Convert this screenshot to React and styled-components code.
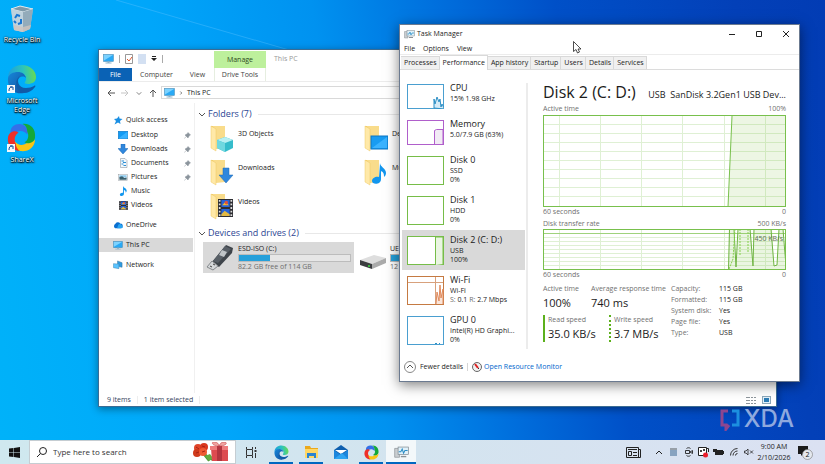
import React from "react";
import styled, { createGlobalStyle, css } from "styled-components";

const GlobalStyle = createGlobalStyle`
  * {
    box-sizing: border-box;
  }
  body {
    margin: 0;
    font-family: "Open Sans", "Noto Sans", sans-serif;
    font-size: 7px;
    line-height: 10px;
    color: #1b1b1b;
  }
  button, input {
    font: inherit;
    color: inherit;
    border: 0;
    padding: 0;
    background: none;
  }
  a {
    color: inherit;
    text-decoration: none;
  }
  svg {
    display: block;
    flex-shrink: 0;
  }
`;

const Screen = styled.div`
  display: flex;
  flex-direction: column;
  height: 100vh;
  overflow: hidden;
`;

const Desktop = styled.main`
  position: relative;
  flex: 1;
  min-height: 0;
  background: linear-gradient(
    80deg,
    #00b2f9 0%,
    #00a6fa 25%,
    #0092f0 43%,
    #006fdd 57%,
    #0050c8 70%,
    #0340b8 90%,
    #023cb4 100%
  );
`;

const Beam = styled.svg`
  position: absolute;
  top: 0;
  left: 14%;
  width: 21%;
  height: 50px;
`;

const Shortcuts = styled.div`
  position: relative;
  display: flex;
  flex-direction: column;
  align-items: center;
  width: 44px;
  padding-top: 5px;
  gap: 9px;
`;

const Shortcut = styled.button`
  display: flex;
  flex-direction: column;
  align-items: center;
  gap: 2px;
  width: 44px;
  min-height: 50px;
  color: #fff;
  line-height: 9px;
  text-shadow: 0 1px 1px #000, 0 0 2px #000, 1px 1px 2px #000;
`;

const Window = styled.section`
  position: absolute;
  display: flex;
  flex-direction: column;
  background: #fff;
`;

const ExplorerWindow = styled(Window)`
  top: 49px;
  left: 98px;
  right: 48px;
  bottom: 33px;
  border: 1px solid #3b6c94;
  box-shadow: 0 2px 8px rgba(0, 0, 0, 0.4);
`;

const TaskWindow = styled(Window)`
  top: 24px;
  left: 399px;
  right: 25px;
  bottom: 58px;
  border: 1px solid #6b7a90;
  box-shadow: 0 3px 12px rgba(0, 0, 0, 0.5);
`;

/* Explorer */

const QuickBar = styled.div`
  display: flex;
  align-items: stretch;
  height: 18px;
`;

const QuickTools = styled.div`
  display: flex;
  align-items: center;
  gap: 5px;
  width: 115px;
  padding-left: 4px;
`;

const Bar = styled.span`
  width: 1px;
  height: ${(props) => props.$height || 8}px;
  background: ${(props) => props.$color || "#aaa"};
`;

const ManageTab = styled.button`
  width: 52px;
  margin-top: 1px;
  background: #bdf09c;
  color: #2d4a20;
`;

const WindowTitle = styled.span`
  padding: 4px 8px;
  color: #999;
`;

const Ribbon = styled.div`
  display: flex;
  height: 14px;
  border-bottom: 1px solid #ececec;
`;

const RibbonTab = styled.button`
  width: ${(props) => props.$width}px;
  color: #444;
  ${(props) =>
    props.$file &&
    css`
      background: #0a62b5;
      color: #fff;
    `}
  ${(props) =>
    props.$tools &&
    css`
      border: 1px solid #e6eee0;
      border-width: 0 1px;
    `}
`;

const AddressRow = styled.div`
  display: flex;
  align-items: center;
  gap: 3px;
  height: 21px;
  padding-left: 6px;
`;

const NavButton = styled.button`
  display: flex;
  align-items: center;
  justify-content: center;
  width: 11px;
  height: 12px;
`;

const AddressBox = styled.div`
  display: flex;
  align-items: center;
  flex: 1;
  gap: 3px;
  height: 13px;
  padding-left: 2px;
  border: 1px solid #d9d9d9;
`;

const ExplorerBody = styled.div`
  display: flex;
  flex: 1;
  min-height: 0;
`;

const NavPane = styled.nav`
  display: flex;
  flex-direction: column;
  width: 96px;
  padding-top: 8px;
  border-right: 1px solid #f0f0f0;
`;

const NavItem = styled.a`
  display: flex;
  align-items: center;
  gap: 3px;
  height: ${(props) => (props.$first ? 17 : 14)}px;
  width: 94px;
  margin-top: ${(props) => (props.$root ? 6 : 0)}px;
  padding-left: ${(props) => (props.$nested ? 19 : 14)}px;
  background: ${(props) => (props.$active ? "#d9d9d9" : "none")};
`;

const NavIcon = styled.span`
  display: flex;
  justify-content: center;
  width: 10px;
`;

const Pinned = styled.span`
  margin-left: auto;
  padding-right: 2px;
`;

const Content = styled.div`
  flex: 1;
  padding: 5px 8px 0 3px;
`;

const GroupHeader = styled.h2`
  display: flex;
  align-items: center;
  gap: 2px;
  height: 12px;
  margin: 0;
  font-size: 9px;
  font-weight: 400;
  color: #2c4593;

  &::after {
    content: "";
    flex: 1;
    height: 1px;
    margin-left: 4px;
    background: #e8e8e8;
  }
`;

const FolderGrid = styled.div`
  display: grid;
  grid-template-columns: repeat(2, 154px);
  grid-auto-rows: 34px;
  padding: 5px 0 0 12px;
`;

const Folder = styled.button`
  display: flex;
  align-items: flex-start;
  gap: 4px;
  text-align: left;

  span {
    padding-top: 4px;
  }
`;

const DriveGrid = styled.div`
  display: grid;
  grid-template-columns: repeat(2, 151px);
  gap: 3px;
  padding: 3px 0 0 5px;
`;

const Drive = styled.button`
  display: flex;
  align-items: center;
  gap: 4px;
  height: 31px;
  padding: 0 3px;
  text-align: left;
  background: ${(props) => (props.$selected ? "#d9d9d9" : "none")};
`;

const DriveInfo = styled.div`
  display: flex;
  flex-direction: column;
  flex: 1;
  line-height: 10px;
`;

const Capacity = styled.div`
  height: 8px;
  border: 1px solid #bcbcbc;
  background: #e6e6e6;
`;

const CapacityFill = styled.div`
  height: 100%;
  background: #26a0da;
`;

const Muted = styled.span`
  color: #6d6d6d;
`;

const StatusBar = styled.footer`
  display: flex;
  align-items: center;
  gap: 6px;
  height: 13px;
  padding: 0 5px 0 8px;
  color: #34435c;
`;

const Spacer = styled.span`
  flex: 1;
`;

/* Task Manager */

const TitleBar = styled.header`
  display: flex;
  align-items: center;
  gap: 2px;
  height: 18px;
  padding-left: 4px;
`;

const Caption = styled.div`
  display: flex;
`;

const CaptionButton = styled.button`
  display: flex;
  align-items: center;
  justify-content: center;
  width: 27px;
  height: 18px;
`;

const MenuBar = styled.div`
  display: flex;
  gap: 8px;
  height: 12px;
  padding-left: 4px;
  border-bottom: 1px solid #ececec;
`;

const Tabs = styled.div`
  display: flex;
  align-items: flex-end;
  height: 15px;
  padding-left: 1px;
  border-bottom: 1px solid #dcdcdc;
`;

const Tab = styled.button`
  height: ${(props) => (props.$active ? 15 : 13)}px;
  padding: 0 2px 0 3px;
  border: 1px solid #d9d9d9;
  border-width: 1px 1px 0 0;
  background: ${(props) => (props.$active ? "#fff" : "#f0f0f0")};
  margin-bottom: ${(props) => (props.$active ? -1 : 0)}px;
`;

const TaskBody = styled.div`
  display: flex;
  flex: 1;
  min-height: 0;
`;

const Devices = styled.div`
  display: flex;
  flex-direction: column;
  width: 125px;
  padding: 8px 0 0 2px;
`;

const Device = styled.button`
  display: flex;
  align-items: center;
  gap: 6px;
  height: ${(props) => props.$height}px;
  padding-left: 5px;
  text-align: left;
  background: ${(props) => (props.$active ? "#d9d9d9" : "none")};
`;

const DeviceText = styled.div`
  display: flex;
  flex-direction: column;
  align-self: flex-start;
  padding-top: 4px;
  line-height: 9px;

  strong {
    font-size: 9px;
    font-weight: 400;
    line-height: 12px;
  }
`;

const Divider = styled.div`
  width: 2px;
  margin: 13px 0 5px 1px;
  background: #ececec;
`;

const Panel = styled.div`
  display: flex;
  flex-direction: column;
  flex: 1;
  min-width: 0;
  padding: 10px 13px 0 15px;
`;

const PanelHead = styled.div`
  display: flex;
  align-items: baseline;
  justify-content: space-between;
  height: 24px;
  line-height: 24px;
  white-space: nowrap;

  h1 {
    margin: 0;
    font-size: 16px;
    font-weight: 400;
    line-height: 24px;
  }
  span {
    font-size: 9px;
  }
`;

const Legend = styled.div`
  display: flex;
  justify-content: space-between;
  height: ${(props) => props.$height}px;
  color: #707070;
`;

const Graph = styled.div`
  position: relative;

  svg {
    width: 100%;
  }
`;

const GraphNote = styled.span`
  position: absolute;
  top: 5px;
  right: 3px;
  color: #5f6f55;
`;

const Facts = styled.div`
  display: flex;
  padding-top: 4px;
`;

const Stats = styled.div`
  display: grid;
  grid-template-columns: 48px 80px;
  align-content: start;
  row-gap: 4px;
  width: 128px;
`;

const Stat = styled.div`
  display: flex;
  flex-direction: column;
  min-width: ${(props) => (props.$line ? 66 : 48)}px;
  padding-left: ${(props) => (props.$line ? 3 : 0)}px;
  border-left: ${(props) =>
    props.$line ? `2px ${props.$line} #5cb01c` : "0 none"};
  color: #707070;
  white-space: nowrap;

  b {
    font-size: 11px;
    font-weight: 400;
    line-height: 17px;
    color: #1b1b1b;
  }
`;

const StatRow = styled.div`
  display: flex;
  grid-column: 1 / -1;
`;

const Specs = styled.table`
  border-collapse: collapse;
  height: 54px;

  th {
    width: 48px;
    padding: 0;
    font-weight: 400;
    text-align: left;
    color: #707070;
  }
  td {
    padding: 0;
  }
`;

const TaskFooter = styled.footer`
  display: flex;
  align-items: center;
  gap: 4px;
  height: 27px;
  padding: 0 4px 2px;
`;

const FooterButton = styled.button`
  display: flex;
  align-items: center;
  gap: 4px;
`;

const MonitorLink = styled.a`
  display: flex;
  align-items: center;
  gap: 2px;
  color: #0066cc;
`;

const Pointer = styled.svg`
  position: absolute;
  top: 41px;
  left: 573px;
`;

const Watermark = styled.div`
  position: absolute;
  right: 31px;
  bottom: 8px;
  display: flex;
  align-items: center;
  gap: 4px;
  font-family: "Inter", "Liberation Sans", sans-serif;
  font-size: 24px;
  font-weight: 500;
  line-height: 26px;
  color: #8fa9de;
`;

/* Taskbar */

const Taskbar = styled.footer`
  display: flex;
  align-items: center;
  height: 24px;
  background: linear-gradient(90deg, #cfe8ef, #d3e4ef 50%, #dbe1f2);
`;

const StartButton = styled.button`
  display: flex;
  align-items: center;
  justify-content: center;
  width: 29px;
  height: 24px;
`;

const SearchBox = styled.label`
  display: flex;
  align-items: center;
  gap: 6px;
  width: 207px;
  height: 24px;
  padding: 0 6px 0 7px;
  border: 1px solid #c5cdd2;
  background: #fff;

  input {
    flex: 1;
    min-width: 0;
    font-size: 8px;
    outline: 0;
  }
  input::placeholder {
    color: #333;
    opacity: 1;
  }
`;

const AppButton = styled.button`
  position: relative;
  display: flex;
  align-items: center;
  justify-content: center;
  width: 30px;
  height: 24px;
  background: ${(props) => (props.$active ? "#f3f8fa" : "none")};

  &::after {
    content: "";
    position: absolute;
    left: ${(props) => (props.$active ? 0 : 3)}px;
    right: ${(props) => (props.$active ? 0 : 3)}px;
    bottom: 0;
    height: ${(props) => (props.$open ? 2 : 0)}px;
    background: #0067c0;
  }
`;

const Tray = styled.div`
  display: flex;
  align-items: center;
  margin-left: auto;
  padding-right: 7px;
`;

const TrayButton = styled.button`
  display: flex;
  align-items: center;
  justify-content: center;
  width: ${(props) => props.$width || 15}px;
  height: 24px;
`;

const Clock = styled.button`
  width: 36px;
  text-align: center;
  line-height: 11px;
`;

/* Icons */

const MonitorIcon = ({ width = 11 }) => (
  <svg width={width} height={width - 1} viewBox="0 0 22 20">
    <rect x="1" y="1" width="20" height="14" fill="#29a9f5" stroke="#4b87ad" />
    <path d="M2 2h18L2 13z" fill="#7bd2ff" />
    <path d="M9 15h4v2h4v2H5v-2h4z" fill="#8fb5cb" />
  </svg>
);

const DesktopIcon = ({ width = 10, height = 8 }) => (
  <svg width={width} height={height} viewBox="0 0 20 14" preserveAspectRatio="none">
    <rect x=".5" y=".5" width="19" height="13" fill="#129bf4" stroke="#0871bd" />
    <path d="M1 13L19 1v12z" fill="#35b1ff" />
  </svg>
);

const DownArrow = ({ size = 10 }) => (
  <svg width={size} height={size} viewBox="0 0 20 20">
    <path d="M6 0h8v9h6L10 20 0 9h6z" fill="#2f87dd" stroke="#1d68b5" />
  </svg>
);

const NoteIcon = ({ width = 9, height = 10 }) => (
  <svg width={width} height={height} viewBox="0 0 18 22">
    <path d="M8 0c1 4 8 5 8 10 0 2-1 4-2 5 0-4-2-5-4-6v8c0 6-9 6-9 2 0-3 4-5 7-4z" fill="#1296ee" />
  </svg>
);

const DocIcon = () => (
  <svg width="9" height="10" viewBox="0 0 18 20">
    <path d="M3 1h9l4 4v14H3z" fill="#f4f8fb" stroke="#7a8790" />
    <path d="M5 6h5M8 9h6M5 12h4M9 15h5" stroke="#2d8fd5" strokeWidth="2" />
  </svg>
);

const PictureIcon = () => (
  <svg width="10" height="9" viewBox="0 0 22 18">
    <rect x="1" y="2" width="20" height="14" fill="#fff" stroke="#8a949b" />
    <path d="M3 4h16v5H3z" fill="#8fcbee" />
    <path d="M3 8l6-2 5 4 5-1v5H3z" fill="#39606e" />
  </svg>
);

const FilmIcon = ({ width = 9, height = 9 }) => (
  <svg width={width} height={height} viewBox="0 0 18 20" preserveAspectRatio="none">
    <path d="M0 0h18v20H0z" fill="#2e2e33" />
    <path d="M4 1h10v8H4zM4 11h10v8H4z" fill="#2563d8" />
    <path d="M5 7l4-4 4 4z" fill="#f2b930" />
    <circle cx="10" cy="4" r="2" fill="#e0523a" />
    <path d="M4 17l4-4 6 4v2H4z" fill="#e2b842" />
    <path d="M2 1v18M16 1v18" stroke="#ddd" strokeWidth="2" strokeDasharray="2 2" />
  </svg>
);

const StarIcon = () => (
  <svg width="10" height="10" viewBox="0 0 20 20">
    <path d="M12 2l1 5 6 1-5 4 1 6-5-3-7 4 3-7-4-4 6-1z" fill="#1a8fe3" />
  </svg>
);

const CloudIcon = () => (
  <svg width="10" height="8" viewBox="0 0 22 16">
    <path d="M5 15a5 5 0 010-9 6 6 0 0111-1 5 5 0 011 10z" fill="#0a6fd0" />
    <path d="M9 15l3-8a5 5 0 018 3c3 2 1 5-1 5z" fill="#29a5f2" />
  </svg>
);

const NetworkIcon = () => (
  <svg width="10" height="10" viewBox="0 0 22 20">
    <path d="M10 1l10 4v10l-10-2z" fill="#2e9be0" stroke="#2f6b94" />
    <path d="M1 7l12 1v10L1 16z" fill="#59c3ff" stroke="#3a7fa8" />
  </svg>
);

const PinIcon = () => (
  <svg width="7" height="7" viewBox="0 0 14 14">
    <path d="M8 1l5 5-2 1-2 3-1 2-6-6 2-1 3-2zM4 9l-3 4" fill="#8b949c" stroke="#8b949c" />
  </svg>
);

const FolderIcon = ({ children }) => (
  <svg width="24" height="27" viewBox="0 0 24 27">
    <path d="M1 1h14v22H1z" fill="#efcb68" />
    <path d="M3 1h12v22l-9 1z" fill="#f9dc8b" />
    <path d="M1 1l5 3v22l-5-3z" fill="#ffe9a8" stroke="#eec966" strokeWidth=".5" />
    {children}
  </svg>
);

const Chevron = ({ d = "M1 3l3 3 3-3", size = 8, color = "#555" }) => (
  <svg width={size} height={size} viewBox="0 0 8 8">
    <path d={d} fill="none" stroke={color} />
  </svg>
);

const RecycleBinIcon = () => (
  <svg width="24" height="28" viewBox="0 0 24 28">
    <path d="M1 4l9-3 13 3-3 20-7 3-9-2z" fill="#a9c0ce" />
    <path d="M1 4l12 3 10-3-13-3z" fill="#7e99a9" stroke="#dfeaf0" />
    <path d="M1 4l12 3v20l-9-2z" fill="#bfd2dd" />
    <path d="M13 7l10-3-3 20-7 3z" fill="#93abba" />
    <path d="M4 20l9 2 8-2-1 4-7 3-9-2z" fill="#d0c4be" opacity=".8" />
    <path d="M5 13l2-3 3 1M11 14v4l-3 1M6 18l-2-2" fill="none" stroke="#1976d2" strokeWidth="2" />
  </svg>
);

const EdgeIcon = ({ size }) => (
  <svg width={size} height={size} viewBox="0 0 30 30">
    <defs>
      <linearGradient id="edgeTop" x1="0" y1=".5" x2="1" y2=".4">
        <stop offset="0" stopColor="#1c9ede" />
        <stop offset=".55" stopColor="#2bc3bd" />
        <stop offset="1" stopColor="#6bdc50" />
      </linearGradient>
      <linearGradient id="edgeLow" x1="0" y1="0" x2="1" y2="1">
        <stop offset="0" stopColor="#1687d9" />
        <stop offset="1" stopColor="#124f9f" />
      </linearGradient>
    </defs>
    <path d="M1 14C1 6 7 1 15 1s14 6 14 12c0 5-4 7-8 7-3 0-4-1-3-2 3-4 0-9-5-9C7 9 2 11 1 14z" fill="url(#edgeTop)" />
    <path d="M1 14c1-4 5-6 10-6 4 0 7 2 8 6-3-3-8-1-9 4-1 5 3 9 7 11C8 31 0 24 1 14z" fill="url(#edgeLow)" />
    <path d="M13 12c-4 4-2 12 6 12 3 0 6-1 8-2 1-1 2 0 1 1-3 4-7 6-11 6C8 28 7 16 13 12z" fill="#115ba7" />
  </svg>
);

const ShareXIcon = ({ size }) => (
  <svg width={size} height={size} viewBox="0 0 30 30">
    <path d="M4 11C2 4 10-1 17 2c4 2 5 6 4 10-3-4-8-5-12-2-2 0-4 0-5 1z" fill="#3470e8" />
    <path d="M16 1c8-1 14 5 13 14-1 6-7 8-11 5 4-2 5-7 3-11 0-4-2-7-5-8z" fill="#14a83a" />
    <path d="M29 17c0 8-7 13-15 12-6-1-8-6-6-10 3 4 8 5 12 2 4 0 7-1 9-4z" fill="#f9c514" />
    <path d="M13 29C4 28 0 22 1 15c1-6 7-8 11-5-4 2-5 7-3 11 0 4 2 6 4 8z" fill="#ee3029" />
  </svg>
);

const LinkedIcon = ({ children }) => (
  <svg width="30" height="30" viewBox="0 0 30 30">
    {children}
    <rect x="0" y="21" width="8" height="8" fill="#f5f8fb" />
    <path d="M2 27c0-3 1-4 3-4M3 23h3v3" fill="none" stroke="#0d4d9b" />
  </svg>
);

const UsbIcon = () => (
  <svg width="28" height="27" viewBox="0 0 28 27">
    <path d="M20 1l7 3-1 5-13 14-7-5z" fill="#3f454b" />
    <path d="M19 2l6 3L12 19l-5-2z" fill="#585f66" />
    <path d="M16 6l5 2-3 5-5-2z" fill="#bfc4c7" />
    <path d="M6 17l6 5-5 4-6-3z" fill="#d5d8da" stroke="#85898c" />
    <path d="M4 22l2 1M7 20l2 1" stroke="#444" />
  </svg>
);

const DiskIcon = () => (
  <svg width="26" height="27" viewBox="0 0 26 27">
    <path d="M0 16l14-5 12 3-14 6z" fill="#dedede" />
    <path d="M0 16l12 4v5L0 21z" fill="#3b3d3f" />
    <path d="M12 20l14-6v5l-14 6z" fill="#ababab" />
    <circle cx="9" cy="22" r="1" fill="#3bdc42" />
  </svg>
);

const TaskManagerIcon = ({ width = 11, height = 9 }) => (
  <svg width={width} height={height} viewBox="0 0 22 18">
    <path d="M1 3h7v13H1z" fill="#c9ced1" stroke="#8a9196" />
    <rect x="6" y="1" width="15" height="11" fill="#dff1fa" stroke="#7c858b" />
    <path d="M7 8h3l2-4 2 6 2-4h4" fill="none" stroke="#2a8dc5" strokeWidth="1.5" />
    <path d="M10 14h8v2h-8z" fill="#8a9196" />
  </svg>
);

const GiftIcon = () => (
  <svg width="37" height="20" viewBox="0 0 37 20">
    <path d="M9 9l11 9M9 9l8 10" stroke="#4d9a38" strokeWidth="2" />
    <path d="M13 14l5-2 3 4-4 3z" fill="#62ad42" />
    <circle cx="6" cy="6" r="4" fill="#e0452a" />
    <circle cx="12" cy="5" r="4" fill="#d9381f" />
    <circle cx="5" cy="11" r="4" fill="#cf3a1c" />
    <circle cx="11" cy="10" r="4" fill="#ef5a33" />
    <path d="M4 5l3 2M10 4l3 1M4 11l3-1M10 10l3-1" stroke="#a82314" />
    <path d="M19 6h17v13H20z" fill="#dd4b50" />
    <path d="M18 4h18v4H18z" fill="#ee7b7c" />
    <path d="M25 4h5v15h-5z" fill="#b3353f" />
    <path d="M27 4c-8 0-8-5-4-4 2 0 4 2 4 4 1-2 2-4 5-4 4 0 3 4-5 4z" fill="#f0a4a0" stroke="#c5434a" strokeWidth=".6" />
  </svg>
);

const ExplorerIcon = () => (
  <svg width="15" height="14" viewBox="0 0 15 14">
    <path d="M1 1h5l1 2h7v10H1z" fill="#eba91c" />
    <path d="M1 4h13v9H1z" fill="#ffd765" />
    <path d="M3 8h9v5h-2v-2H5v2H3z" fill="#2b83d1" />
  </svg>
);

const MailIcon = () => (
  <svg width="16" height="14" viewBox="0 0 16 14">
    <path d="M1 5l7-5 7 5v9H1z" fill="#0f5fae" />
    <path d="M2 5h12L8 9z" fill="#fff" />
    <path d="M1 5l7 5 7-5v9H1z" fill="#1c86dc" />
    <path d="M1 14l8-6 6 6z" fill="#2fa5f2" />
  </svg>
);

/* Charts */

const range = (count) => Array.from({ length: count }, (_, index) => index + 1);

const Grid = ({ rows, step, height }) => (
  <g stroke="#dff0d4">
    {[16, 57, 98, 139, 181, 222].map((x) => (
      <line key={x} x1={x + 0.5} y1="0" x2={x + 0.5} y2={height} />
    ))}
    {range(rows).map((row) => (
      <line key={row} x1="0" y1={row * step + 0.5} x2="243" y2={row * step + 0.5} />
    ))}
  </g>
);

const ActiveTimeGraph = () => (
  <svg height="92" viewBox="0 0 243 92" preserveAspectRatio="none">
    <Grid rows={9} step={9} height={92} />
    <path d="M185 92L189 1h54v91z" fill="#7cc242" fillOpacity=".14" />
    <path d="M185 92L189 1" fill="none" stroke="#78c04c" />
    <rect x=".5" y=".5" width="242" height="91" fill="none" stroke="#78c04c" />
  </svg>
);

const TransferGraph = () => (
  <svg height="41" viewBox="0 0 243 41" preserveAspectRatio="none">
    <Grid rows={9} step={4} height={41} />
    <path d="M0 4.5h243" stroke="#9fd27c" />
    <path d="M185 41l1-41h5l2 38 2-38h13l2 37 1-37h18l2 37 3-1 2-36h4l2 38v3z" fill="#7cc242" fillOpacity=".16" />
    <path
      d="M185.500 41l1-41M191 0l2 38 2-38M207 0l3 37 1-37M228 0l3 37 3-1 2-36M240 0l3 38"
      fill="none"
      stroke="#6fb443"
    />
    <path
      d="M186 40l4-10 2-30M197 0v26M205 0v24"
      fill="none"
      stroke="#86d04e"
      strokeDasharray="2 1"
    />
    <rect x=".5" y=".5" width="242" height="40" fill="none" stroke="#78c04c" />
  </svg>
);

const Thumb = ({ height, color, children }) => (
  <svg width="37" height={height} viewBox={`0 0 37 ${height}`}>
    <rect x=".5" y=".5" width="36" height={height - 1} fill="#fff" stroke={color} />
    {children}
  </svg>
);

const devices = [
  {
    name: "CPU",
    lines: ["15%  1.98 GHz"],
    color: "#4a9fd0",
    small: true,
    graph: (
      <path d="M27 24v-9l1 5 2-7 2 5 1-3 1 8 1-3 2 4v1z" fill="#d5ebf7" stroke="#2d8fc5" />
    ),
  },
  {
    name: "Memory",
    lines: ["5.0/7.9 GB (63%)"],
    color: "#b05fcb",
    small: true,
    graph: <path d="M27.500 24V10.500l2-1H36V24" fill="#f1eaf4" stroke="#b05fcb" />,
  },
  { name: "Disk 0", lines: ["SSD", "0%"], color: "#76bd48" },
  { name: "Disk 1", lines: ["HDD", "0%"], color: "#76bd48" },
  {
    name: "Disk 2 (C: D:)",
    lines: ["USB", "100%"],
    color: "#76bd48",
    active: true,
    graph: <path d="M28.500 29V1H36V28" fill="#eaf5e2" stroke="#76bd48" />,
  },
  {
    name: "Wi-Fi",
    lines: [
      "Wi-Fi",
      <>
        <Muted>S:</Muted> 0.1 <Muted>R:</Muted> 2.7 Mbps
      </>,
    ],
    color: "#c57a42",
    graph: (
      <>
        <path d="M1 6.500h35M28.500 1v27" stroke="#d8a17c" />
        <path d="M29 28l1-12 2 9 1-16 1 13 2-9v15" fill="#fae5d9" stroke="#e08a5c" />
      </>
    ),
  },
  {
    name: "GPU 0",
    lines: ["Intel(R) HD Graphi...", "0%"],
    color: "#4a9fd0",
    graph: <path d="M28 27.500h2M32 27.500h1" stroke="#2d8fc5" />,
  },
];

const specs = [
  ["Capacity:", "115 GB"],
  ["Formatted:", "115 GB"],
  ["System disk:", "Yes"],
  ["Page file:", "Yes"],
  ["Type:", "USB"],
];

const quickAccess = [
  { name: "Desktop", icon: <DesktopIcon />, pinned: true },
  { name: "Downloads", icon: <DownArrow />, pinned: true },
  { name: "Documents", icon: <DocIcon />, pinned: true },
  { name: "Pictures", icon: <PictureIcon />, pinned: true },
  { name: "Music", icon: <NoteIcon /> },
  { name: "Videos", icon: <FilmIcon /> },
];

const folders = [
  {
    name: "3D Objects",
    art: (
      <>
        <path d="M7 15l8-3 8 3v8l-8 4-8-4z" fill="#35bccb" />
        <path d="M7 15l8-3 8 3-8 3z" fill="#b8f0f3" />
        <path d="M7 15l8 3v9l-8-4z" fill="#6fd8e0" />
      </>
    ),
  },
  {
    name: "Desktop",
    art: (
      <>
        <rect x="7" y="11" width="17" height="13" fill="#189cf2" stroke="#0c77c4" />
        <path d="M8 23L23 12v11z" fill="#3bb3ff" />
      </>
    ),
  },
  {
    name: "Downloads",
    art: <path d="M13 9h6v7h4l-7 8-7-8h4z" fill="#2f87dd" stroke="#1d68b5" strokeWidth=".5" />,
  },
  {
    name: "Music",
    art: (
      <path d="M16 4c0 4 6 5 6 10 0 2-1 3-2 4 0-4-1-5-3-6v8c0 6-9 6-9 2 0-3 4-5 7-4z" fill="#1296ee" />
    ),
  },
  {
    name: "Videos",
    art: (
      <svg x="8" y="6" width="15" height="18">
        <FilmIcon width={15} height={18} />
      </svg>
    ),
  },
];

const Explorer = () => (
  <ExplorerWindow aria-label="This PC">
    <QuickBar>
      <QuickTools>
        <MonitorIcon />
        <Bar />
        <svg width="8" height="10" viewBox="0 0 8 10">
          <path d="M.5.5h7v9h-7z" fill="#fff" stroke="#999" />
          <path d="M2 5l2 2 3-4" fill="none" stroke="#e0562d" />
        </svg>
        <svg width="8" height="10" viewBox="0 0 8 10">
          <path d="M0 0h8v10H0z" fill="#d3e0f2" />
        </svg>
        <svg width="6" height="6" viewBox="0 0 6 6">
          <path d="M1 0h4v1H1zM0 2h6L3 5z" fill="#222" />
        </svg>
        <Bar />
      </QuickTools>
      <ManageTab>Manage</ManageTab>
      <WindowTitle>This PC</WindowTitle>
    </QuickBar>
    <Ribbon>
      <RibbonTab $width={33} $file>
        File
      </RibbonTab>
      <RibbonTab $width={49}>Computer</RibbonTab>
      <RibbonTab $width={33}>View</RibbonTab>
      <RibbonTab $width={52} $tools>
        Drive Tools
      </RibbonTab>
    </Ribbon>
    <AddressRow>
      <NavButton aria-label="Back">
        <Chevron d="M4 1L1 4l3 3M1 4h7" />
      </NavButton>
      <NavButton aria-label="Forward">
        <Chevron d="M4 1l3 3-3 3M7 4H0" color="#c5c5c5" />
      </NavButton>
      <NavButton aria-label="Recent locations">
        <Chevron size={6} />
      </NavButton>
      <NavButton aria-label="Up">
        <Chevron d="M1 4l3-3 3 3M4 1v7" />
      </NavButton>
      <AddressBox>
        <MonitorIcon />
        <Chevron d="M3 2l2 2-2 2" size={6} />
        <span>This PC</span>
      </AddressBox>
    </AddressRow>
    <ExplorerBody>
      <NavPane>
        <NavItem href="#quick" $first>
          <StarIcon />
          Quick access
        </NavItem>
        {quickAccess.map((item) => (
          <NavItem key={item.name} href={`#${item.name}`} $nested>
            <NavIcon>{item.icon}</NavIcon>
            {item.name}
            {item.pinned ? (
              <Pinned>
                <PinIcon />
              </Pinned>
            ) : null}
          </NavItem>
        ))}
        <NavItem href="#onedrive" $root>
          <CloudIcon />
          OneDrive
        </NavItem>
        <NavItem href="#thispc" $root $active>
          <MonitorIcon width={10} />
          This PC
        </NavItem>
        <NavItem href="#network" $root>
          <NetworkIcon />
          Network
        </NavItem>
      </NavPane>
      <Content>
        <GroupHeader>
          <Chevron />
          Folders (7)
        </GroupHeader>
        <FolderGrid>
          {folders.map((folder) => (
            <Folder key={folder.name}>
              <FolderIcon>{folder.art}</FolderIcon>
              <span>{folder.name}</span>
            </Folder>
          ))}
        </FolderGrid>
        <GroupHeader>
          <Chevron />
          Devices and drives (2)
        </GroupHeader>
        <DriveGrid>
          <Drive $selected>
            <UsbIcon />
            <DriveInfo>
              <span>ESD-ISO (C:)</span>
              <Capacity>
                <CapacityFill style={{ width: "28%" }} />
              </Capacity>
              <Muted>82.2 GB free of 114 GB</Muted>
            </DriveInfo>
          </Drive>
          <Drive>
            <DiskIcon />
            <DriveInfo>
              <span>UEFI (D:)</span>
              <Capacity>
                <CapacityFill style={{ width: "50%" }} />
              </Capacity>
              <Muted>12 MB free</Muted>
            </DriveInfo>
          </Drive>
        </DriveGrid>
      </Content>
    </ExplorerBody>
    <StatusBar>
      <span>9 items</span>
      <Bar $color="#eee" />
      <span>1 item selected</span>
      <Bar $color="#eee" />
      <Spacer />
      <svg width="10" height="8" viewBox="0 0 10 8">
        <path d="M0 1.500h4M0 4.500h4M0 7.500h4M5 1.500h2M5 4.500h2M5 7.500h2M8 1.500h2M8 4.500h2M8 7.500h2" stroke="#8d959b" />
      </svg>
      <svg width="9" height="8" viewBox="0 0 9 8">
        <rect x=".5" y=".5" width="8" height="7" fill="#e4f1fa" stroke="#8ba7b9" />
        <path d="M2 2h5v4H2z" fill="#2c7cb5" />
      </svg>
    </StatusBar>
  </ExplorerWindow>
);

const TaskManager = () => (
  <TaskWindow aria-label="Task Manager">
    <TitleBar>
      <TaskManagerIcon />
      <span>Task Manager</span>
      <Spacer />
      <Caption>
        <CaptionButton aria-label="Minimize">
          <Chevron d="M1 4.500h6" color="#222" />
        </CaptionButton>
        <CaptionButton aria-label="Maximize">
          <Chevron d="M1.500 1.500h5v5h-5z" color="#222" />
        </CaptionButton>
        <CaptionButton aria-label="Close">
          <Chevron d="M1 1l6 6M7 1L1 7" color="#222" />
        </CaptionButton>
      </Caption>
    </TitleBar>
    <MenuBar>
      <button>File</button>
      <button>Options</button>
      <button>View</button>
    </MenuBar>
    <Tabs>
      <Tab>Processes</Tab>
      <Tab $active>Performance</Tab>
      <Tab>App history</Tab>
      <Tab>Startup</Tab>
      <Tab>Users</Tab>
      <Tab>Details</Tab>
      <Tab>Services</Tab>
    </Tabs>
    <TaskBody>
      <Devices>
        {devices.map((device) => (
          <Device
            key={device.name}
            $height={device.small ? 36 : 40}
            $active={device.active}
          >
            <Thumb height={device.small ? 25 : 29} color={device.color}>
              {device.graph}
            </Thumb>
            <DeviceText>
              <strong>{device.name}</strong>
              {device.lines.map((line, index) => (
                <span key={index}>{line}</span>
              ))}
            </DeviceText>
          </Device>
        ))}
      </Devices>
      <Divider />
      <Panel>
        <PanelHead>
          <h1>Disk 2 (C: D:)</h1>
          <span>USB&nbsp; SanDisk 3.2Gen1 USB Dev...</span>
        </PanelHead>
        <Legend $height={11}>
          <span>Active time</span>
          <span>100%</span>
        </Legend>
        <Graph>
          <ActiveTimeGraph />
        </Graph>
        <Legend $height={12}>
          <span>60 seconds</span>
          <span>0</span>
        </Legend>
        <Legend $height={10}>
          <span>Disk transfer rate</span>
          <span>500 KB/s</span>
        </Legend>
        <Graph>
          <TransferGraph />
          <GraphNote>450 KB/s</GraphNote>
        </Graph>
        <Legend $height={10}>
          <span>60 seconds</span>
          <span>0</span>
        </Legend>
        <Facts>
          <Stats>
            <Stat>
              Active time
              <b>100%</b>
            </Stat>
            <Stat>
              Average response time
              <b>740 ms</b>
            </Stat>
            <StatRow>
              <Stat $line="solid">
                Read speed
                <b>35.0 KB/s</b>
              </Stat>
              <Stat $line="dotted">
                Write speed
                <b>3.7 MB/s</b>
              </Stat>
            </StatRow>
          </Stats>
          <Specs>
            <tbody>
              {specs.map(([label, value]) => (
                <tr key={label}>
                  <th scope="row">{label}</th>
                  <td>{value}</td>
                </tr>
              ))}
            </tbody>
          </Specs>
        </Facts>
      </Panel>
    </TaskBody>
    <TaskFooter>
      <FooterButton>
        <svg width="12" height="12" viewBox="0 0 12 12">
          <circle cx="6" cy="6" r="5.500" fill="#fff" stroke="#888" />
          <path d="M3 7l3-3 3 3" fill="none" stroke="#555" />
        </svg>
        Fewer details
      </FooterButton>
      <Bar $color="#d5d5d5" />
      <MonitorLink href="#monitor">
        <svg width="10" height="10" viewBox="0 0 10 10">
          <circle cx="5" cy="5" r="4.500" fill="#f0f0f0" stroke="#666" />
          <path d="M3 2l3 4" stroke="#d22" strokeWidth="2" />
          <path d="M6 6l1 1" stroke="#333" />
        </svg>
        Open Resource Monitor
      </MonitorLink>
    </TaskFooter>
  </TaskWindow>
);

const App = () => (
  <Screen>
    <GlobalStyle />
    <Desktop>
      <Beam viewBox="0 0 173 50" preserveAspectRatio="none">
        <path d="M0 0l173 50" stroke="#5cc4ff" strokeOpacity=".4" />
      </Beam>
      <Shortcuts>
        <Shortcut>
          <RecycleBinIcon />
          Recycle Bin
        </Shortcut>
        <Shortcut>
          <LinkedIcon>
            <EdgeIcon size={30} />
          </LinkedIcon>
          <span>
            Microsoft
            <br />
            Edge
          </span>
        </Shortcut>
        <Shortcut>
          <LinkedIcon>
            <ShareXIcon size={29} />
          </LinkedIcon>
          ShareX
        </Shortcut>
      </Shortcuts>
      <Explorer />
      <TaskManager />
      <Watermark>
        <svg width="20" height="24" viewBox="0 0 20 24">
          <path d="M8 4H2v14h4v4l3-4" fill="none" stroke="#8d4690" strokeWidth="3" />
          <path d="M12 4h6v14h-6" fill="none" stroke="#1c8fe0" strokeWidth="3" />
        </svg>
        XDA
      </Watermark>
      <Pointer width="9" height="13" viewBox="0 0 9 13">
        <path d="M.5.5v10l2.500-2 1.500 3.500 2-1-1.500-3H8z" fill="#fff" stroke="#222" strokeWidth=".8" />
      </Pointer>
    </Desktop>
    <Taskbar>
      <StartButton aria-label="Start">
        <svg width="11" height="11" viewBox="0 0 11 11">
          <path d="M0 1.500L4.500 1v4H0zM5 1l6-1v5H5zM0 5.500h4.500V10L0 9.500zM5 5.500h6V11l-6-1z" fill="#111" />
        </svg>
      </StartButton>
      <SearchBox>
        <svg width="10" height="10" viewBox="0 0 10 10">
          <circle cx="6" cy="4" r="3.500" fill="none" stroke="#222" />
          <path d="M3.500 6.500L0 10" stroke="#222" />
        </svg>
        <input type="text" aria-label="Search" placeholder="Type here to search" />
        <GiftIcon />
      </SearchBox>
      <AppButton aria-label="Task view">
        <svg width="12" height="11" viewBox="0 0 12 11">
          <path d="M1.500 2.500h6v6h-6zM1.500 0v2M7.500 0v2M1.500 9v2M7.500 9v2M10.500 0v2M10.500 6v5" fill="none" stroke="#333" />
          <path d="M9.500 3h2v2h-2z" fill="#333" />
        </svg>
      </AppButton>
      <AppButton aria-label="Microsoft Edge" $open>
        <EdgeIcon size={15} />
      </AppButton>
      <AppButton aria-label="File Explorer" $open>
        <ExplorerIcon />
      </AppButton>
      <AppButton aria-label="Mail">
        <MailIcon />
      </AppButton>
      <AppButton aria-label="ShareX" $open>
        <ShareXIcon size={15} />
      </AppButton>
      <AppButton aria-label="Task Manager" $open $active>
        <TaskManagerIcon width={15} height={13} />
      </AppButton>
      <Tray>
        <TrayButton aria-label="News" $width={36}>
          <svg width="15" height="11" viewBox="0 0 15 11">
            <path d="M.5.5h12v10H.500zM12.500 2.500h2v8h-3M2 2.500h9M2.500 4.500h3v4h-3zM7 5.500h4M7 8.500h4" fill="none" stroke="#222" />
          </svg>
        </TrayButton>
        <TrayButton aria-label="Show hidden icons">
          <Chevron d="M1 6l3-3 3 3" color="#222" />
        </TrayButton>
        <TrayButton aria-label="Monitor status">
          <svg width="7" height="8" viewBox="0 0 7 8">
            <path d="M0 0h7v8H0z" fill="#87a3c0" />
            <path d="M0 0h7v2H0z" fill="#98a0a8" />
          </svg>
        </TrayButton>
        <TrayButton aria-label="Meet now">
          <svg width="8" height="10" viewBox="0 0 8 10">
            <path d="M1.500 1.500c1-1 3-1 4 0M.5 3.500h4v3h-4zM5 5l2.500-1.500v3zM1.500 8.500c1 1 3 1 4 0" fill="none" stroke="#222" strokeWidth=".9" />
          </svg>
        </TrayButton>
        <TrayButton aria-label="Capture">
          <svg width="11" height="11" viewBox="0 0 11 11">
            <path d="M.5.500h8v8h-8zM9 1.500h1.500V5" fill="#fff" stroke="#222" />
            <path d="M2 3h2v2H2zM5 2h2v2H5z" fill="#444" />
            <circle cx="7.500" cy="8" r="2.500" fill="#ea1f2c" />
          </svg>
        </TrayButton>
        <TrayButton aria-label="Battery">
          <svg width="11" height="8" viewBox="0 0 11 8">
            <path d="M2 2h8v5H2zM10 3h1v3h-1zM0 1h4v3H0z" fill="#222" />
          </svg>
        </TrayButton>
        <TrayButton aria-label="Wi-Fi">
          <svg width="8" height="8" viewBox="0 0 8 8">
            <path d="M.5 7.500a7 7 0 017-7M3 7.500A4.500 4.500 0 017.500 3M5.500 7.500a2 2 0 012-2" fill="none" stroke="#333" />
          </svg>
        </TrayButton>
        <TrayButton aria-label="Muted">
          <svg width="10" height="8" viewBox="0 0 10 8">
            <path d="M.5 3h1.500l2-2v6L2 5H.500zM6 2.500l3 3M9 2.500l-3 3" fill="none" stroke="#222" strokeWidth=".8" />
          </svg>
        </TrayButton>
        <Clock>
          9:00 AM
          <br />
          2/10/2026
        </Clock>
        <TrayButton aria-label="Notifications" $width={26}>
          <svg width="16" height="15" viewBox="0 0 16 15">
            <path d="M1 1h10v8H6l-2 2V9H1z" fill="#1b1b1b" />
            <circle cx="10.500" cy="9.500" r="5" fill="#e4e8ee" stroke="#777" strokeWidth=".6" />
            <text x="10.500" y="12" fontSize="7" textAnchor="middle" fill="#111">
              2
            </text>
          </svg>
        </TrayButton>
      </Tray>
    </Taskbar>
  </Screen>
);

export default App;
